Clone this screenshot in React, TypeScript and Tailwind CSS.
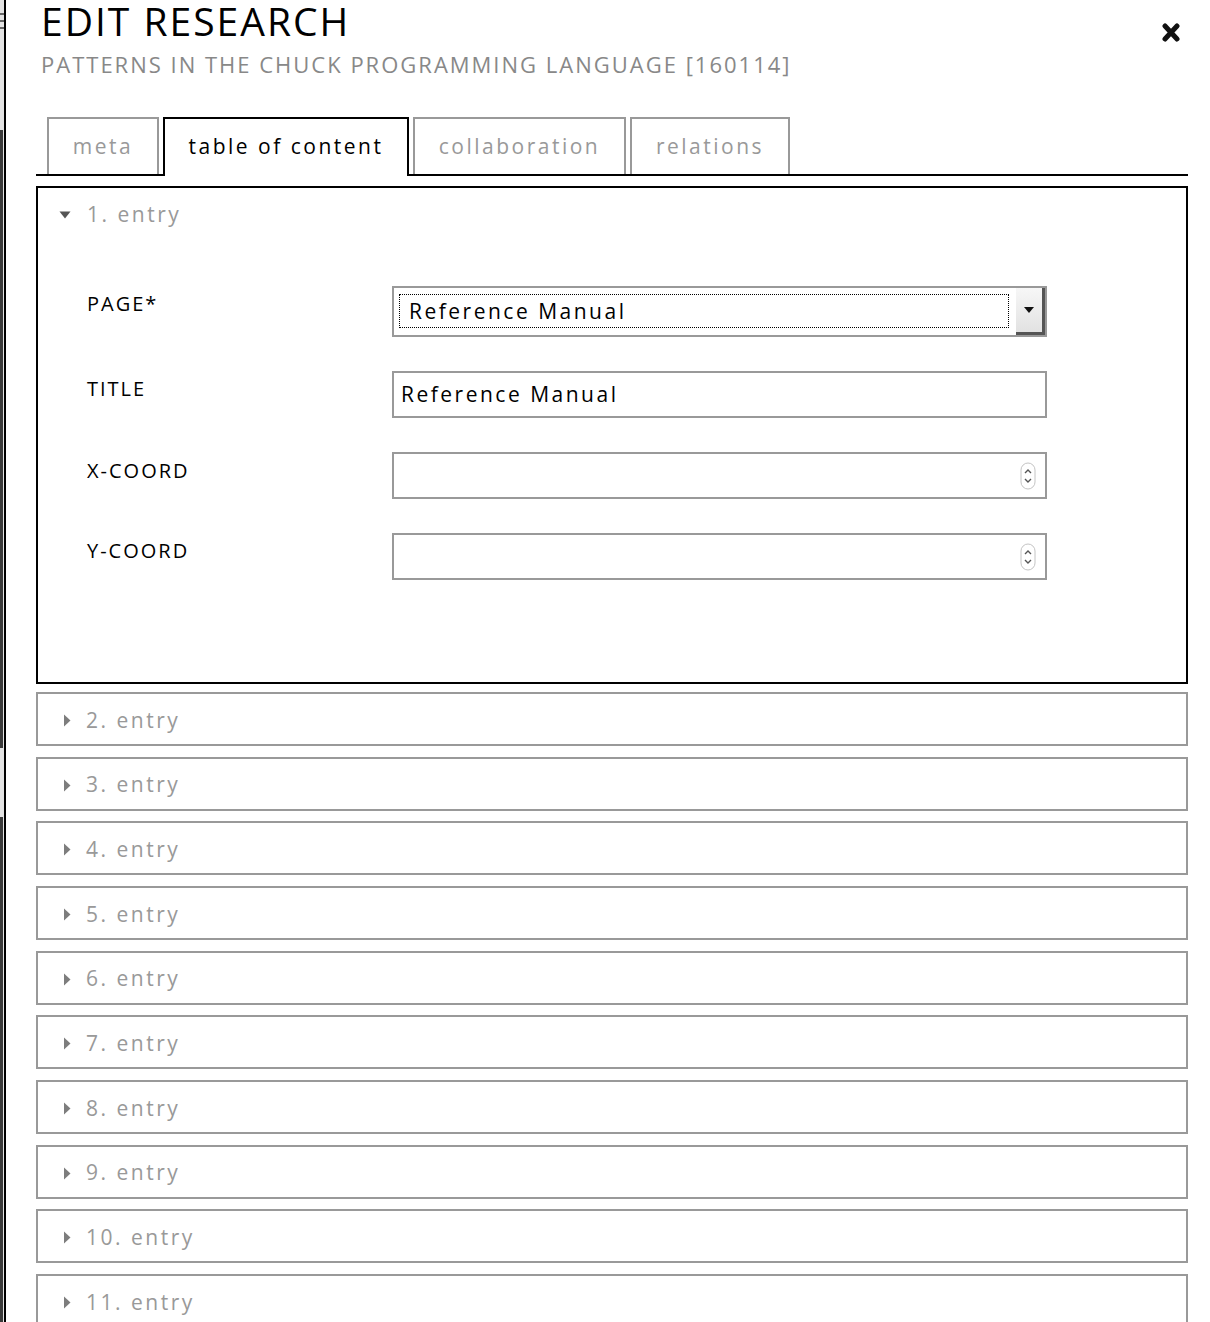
import React from "react";

function DownTri() {
  return (
    <svg width="12" height="8" viewBox="0 0 12 8" className="shrink-0">
      <path d="M0.5 0.5 L11.5 0.5 L6 7.5 Z" fill="#555" />
    </svg>
  );
}

function RightTri() {
  return (
    <svg width="8" height="13" viewBox="0 0 8 13" className="shrink-0">
      <path d="M1 0.5 L7.5 6.5 L1 12.5 Z" fill="#7d7d7d" />
    </svg>
  );
}

function Spinner() {
  return (
    <svg width="16" height="28" viewBox="0 0 16 28" className="shrink-0">
      <rect x="1" y="1" width="14" height="26" rx="7" fill="#fff" stroke="#c4c4c4" />
      <path d="M5 11 L8 8 L11 11" fill="none" stroke="#555" strokeWidth="1.4" />
      <path d="M5 17 L8 20 L11 17" fill="none" stroke="#555" strokeWidth="1.4" />
    </svg>
  );
}

function NumberInput() {
  return (
    <div className="w-[655px] h-[47px] border-2 border-[#999] bg-white flex items-center justify-end pr-[9px]">
      <Spinner />
    </div>
  );
}

const entries = [2, 3, 4, 5, 6, 7, 8, 9, 10, 11];

export default function App() {
  return (
    <div className="h-[1322px] w-[1210px] overflow-hidden bg-white flex font-['Open_Sans','DejaVu_Sans',sans-serif]">
      {/* left edge of underlying page */}
      <div className="w-[4px] shrink-0 bg-[#e3e3e3] flex flex-col">
        <div className="h-[13px] shrink-0" />
        <div className="h-[2px] shrink-0 bg-[#666]" />
        <div className="h-[5px] shrink-0" />
        <div className="h-[2px] shrink-0 bg-[#666]" />
        <div className="h-[5px] shrink-0" />
        <div className="h-[2px] shrink-0 bg-[#666]" />
        <div className="h-[101px] shrink-0" />
        <div className="h-[618px] shrink-0 w-[3px] bg-[#3a3a3a]" />
        <div className="h-[69px] shrink-0" />
        <div className="flex-1 w-[3px] bg-[#3a3a3a]" />
      </div>

      <div className="flex-1 border-l-2 border-black flex flex-col">
        {/* header */}
        <div className="relative shrink-0 h-[117px] pl-[35px]">
          <h1 className="text-[39px] leading-none tracking-[2px] text-black pt-[1px] whitespace-nowrap">
            EDIT RESEARCH
          </h1>
          <div className="mt-[13px] text-[22px] leading-none tracking-[2px] text-[#888] whitespace-nowrap">
            PATTERNS IN THE CHUCK PROGRAMMING LANGUAGE [160114]
          </div>
          <button className="absolute right-[30px] top-[23px] w-[18px] h-[19px]">
            <svg width="18" height="19" viewBox="0 0 18 19">
              <path d="M3 3 L15 16 M15 3 L3 16" stroke="#111" strokeWidth="5" strokeLinecap="round" />
            </svg>
          </button>
        </div>

        <div className="ml-[30px] mr-[22px] shrink-0">
          {/* tabs */}
          <div className="flex items-end gap-[4px] pl-[11px] border-b-2 border-black h-[59px] text-[21px] tracking-[2.5px]">
            <div className="w-[112px] h-[57px] border-2 border-b-0 border-[#999] flex items-center justify-center text-[#999]">
              meta
            </div>
            <div className="w-[246px] h-[59px] -mb-[2px] border-2 border-b-0 border-black bg-white flex items-center justify-center text-black pb-[2px]">
              table of content
            </div>
            <div className="w-[213px] h-[57px] border-2 border-b-0 border-[#999] flex items-center justify-center text-[#999]">
              collaboration
            </div>
            <div className="w-[160px] h-[57px] border-2 border-b-0 border-[#999] flex items-center justify-center text-[#999]">
              relations
            </div>
          </div>

          {/* open entry */}
          <div className="mt-[10px] h-[498px] border-2 border-black">
            <div className="h-[52px] flex items-center pl-[21px] pt-[1px] gap-[16px] text-[21px] tracking-[2.5px] text-[#999]">
              <DownTri />
              <span>1. entry</span>
            </div>

            <div className="mt-[46px] flex flex-col gap-[34px] pl-[49px]">
              <div className="flex items-start">
                <div className="w-[305px] mt-[8px] text-[20px] leading-none tracking-[2px] text-black">PAGE*</div>
                <div className="w-[655px] h-[51px] border-2 border-[#999] bg-white flex">
                  <div className="flex-1 pl-[5px] pr-[7px] pt-[6px] pb-[7px]">
                    <div className="h-full border border-dotted border-black flex items-center pl-[9px] pt-[1px] text-[21px] tracking-[2.5px] text-black">
                      Reference Manual
                    </div>
                  </div>
                  <div className="w-[29px] h-full bg-gradient-to-b from-[#f7f7f7] to-[#e2e2e2] border-r-[3px] border-b-[3px] border-[#555] flex items-start justify-center pt-[19px]">
                    <svg width="10" height="6" viewBox="0 0 10 6">
                      <path d="M0 0 L10 0 L5 6 Z" fill="#111" />
                    </svg>
                  </div>
                </div>
              </div>

              <div className="flex items-start">
                <div className="w-[305px] mt-[8px] text-[20px] leading-none tracking-[2px] text-black">TITLE</div>
                <div className="w-[655px] h-[47px] border-2 border-[#999] bg-white flex items-center pl-[7px] pt-[1px] text-[21px] tracking-[2.5px] text-black">
                  Reference Manual
                </div>
              </div>

              <div className="flex items-start">
                <div className="w-[305px] mt-[9px] text-[20px] leading-none tracking-[2px] text-black">X-COORD</div>
                <NumberInput />
              </div>

              <div className="flex items-start">
                <div className="w-[305px] mt-[8px] text-[20px] leading-none tracking-[2px] text-black">Y-COORD</div>
                <NumberInput />
              </div>
            </div>
          </div>

          {/* collapsed entries */}
          <div className="mt-[8px] flex flex-col gap-[10.67px]">
            {entries.map((n) => (
              <div
                key={n}
                className="h-[54px] shrink-0 border-2 border-[#999] flex items-center pl-[25px] pt-[3px] gap-[15px] text-[21px] tracking-[2.5px] text-[#999]"
              >
                <RightTri />
                <span>{n}. entry</span>
              </div>
            ))}
          </div>
        </div>
      </div>
    </div>
  );
}
